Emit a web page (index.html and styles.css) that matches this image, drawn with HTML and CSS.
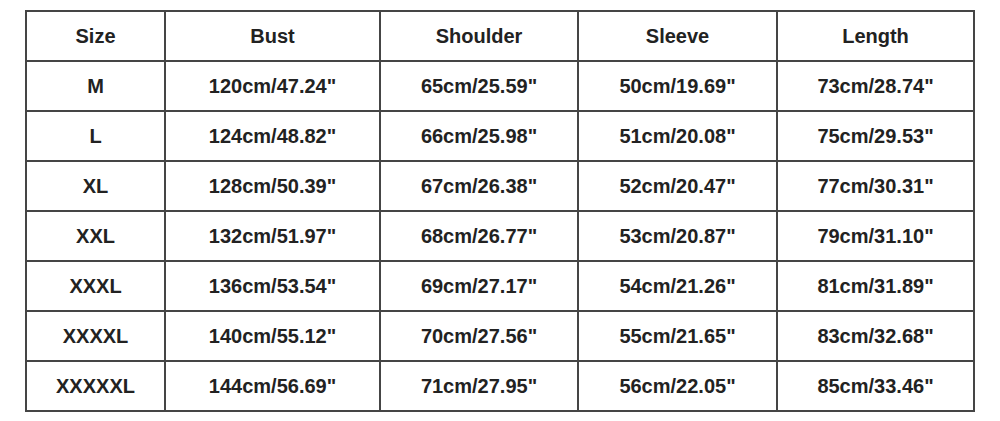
FILE: index.html
```html
<!DOCTYPE html>
<html>
<head>
<meta charset="utf-8">
<link rel="stylesheet" href="styles.css">
</head>
<body>
<table class="size-table">
<colgroup>
<col class="c1"><col class="c2"><col class="c3"><col class="c4"><col class="c5">
</colgroup>
<tr><td>Size</td><td>Bust</td><td>Shoulder</td><td>Sleeve</td><td>Length</td></tr>
<tr><td>M</td><td>120cm/47.24"</td><td>65cm/25.59"</td><td>50cm/19.69"</td><td>73cm/28.74"</td></tr>
<tr><td>L</td><td>124cm/48.82"</td><td>66cm/25.98"</td><td>51cm/20.08"</td><td>75cm/29.53"</td></tr>
<tr><td>XL</td><td>128cm/50.39"</td><td>67cm/26.38"</td><td>52cm/20.47"</td><td>77cm/30.31"</td></tr>
<tr><td>XXL</td><td>132cm/51.97"</td><td>68cm/26.77"</td><td>53cm/20.87"</td><td>79cm/31.10"</td></tr>
<tr><td>XXXL</td><td>136cm/53.54"</td><td>69cm/27.17"</td><td>54cm/21.26"</td><td>81cm/31.89"</td></tr>
<tr><td>XXXXL</td><td>140cm/55.12"</td><td>70cm/27.56"</td><td>55cm/21.65"</td><td>83cm/32.68"</td></tr>
<tr><td>XXXXXL</td><td>144cm/56.69"</td><td>71cm/27.95"</td><td>56cm/22.05"</td><td>85cm/33.46"</td></tr>
</table>
</body>
</html>
```
FILE: styles.css
```css
html, body {
  margin: 0;
  padding: 0;
  background: #ffffff;
}
.size-table {
  margin: 10px 0 0 25px;
  width: 948px;
  border-collapse: collapse;
  table-layout: fixed;
  font-family: "Liberation Sans", Arial, sans-serif;
  font-weight: bold;
  font-size: 20px;
  color: #222222;
}
.c1 { width: 139px; }
.c2 { width: 215px; }
.c3 { width: 198px; }
.c4 { width: 199px; }
.c5 { width: 197px; }
.size-table td {
  border: 2px solid #454545;
  height: 48px;
  padding: 0;
  text-align: center;
  vertical-align: middle;
}
```
